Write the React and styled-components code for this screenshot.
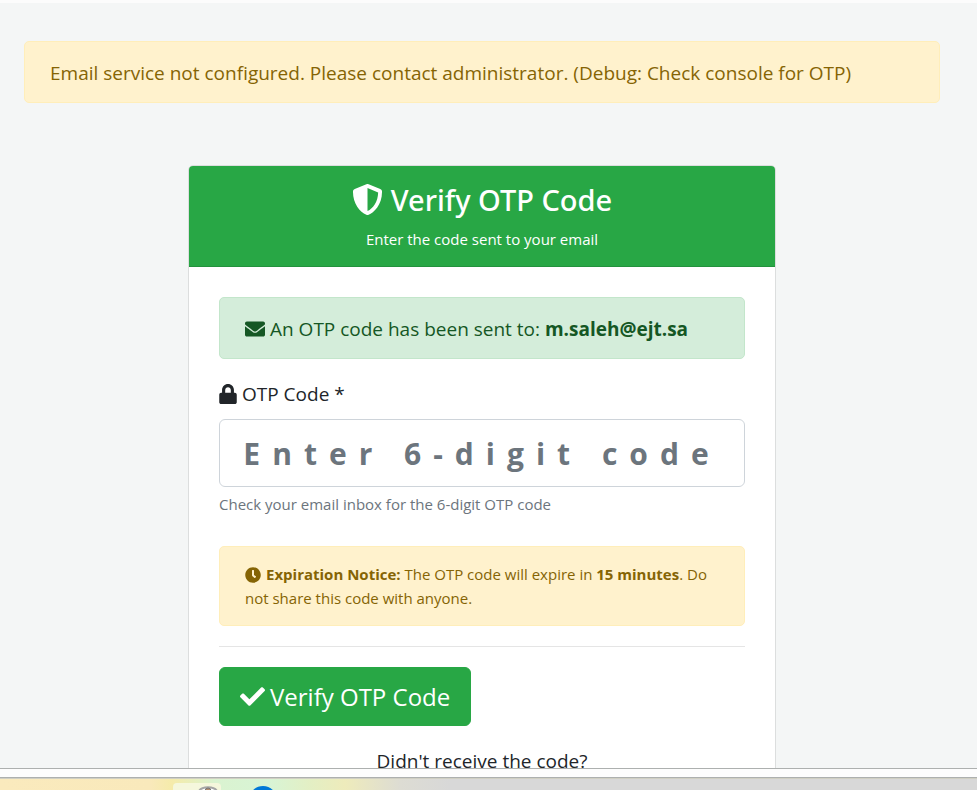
import React from "react";
import styled, { createGlobalStyle, css } from "styled-components";
import { FaShieldAlt, FaEnvelope, FaLock, FaClock, FaCheck } from "react-icons/fa";

const fontStack = `"Segoe UI", "Open Sans", "Noto Sans", sans-serif`;

const GlobalStyle = createGlobalStyle`
  *, *::before, *::after { box-sizing: border-box; }
  body {
    margin: 0;
    font-family: ${fontStack};
    font-size: 19px;
    line-height: 30px;
    color: #212529;
  }
`;

const Screen = styled.div`
  display: flex;
  flex-direction: column;
  height: 100vh;
  overflow: hidden;
`;

const Viewport = styled.main`
  flex: 1;
  min-height: 0;
  overflow: hidden;
  display: flex;
  flex-direction: column;
  align-items: center;
  gap: 62px;
  padding: 38px 37px 0 24px;
  border-top: 3px solid #fcfcfc;
  background: #f4f6f6;
`;

const tones = {
  warning: css`
    color: #856404;
    background: #fff2cd;
    border-color: #ffeeba;
  `,
  success: css`
    color: #155724;
    background: #d4edda;
    border-color: #c3e6cb;
  `,
};

const Alert = styled.div`
  width: 100%;
  padding: ${(p) => (p.$small ? "15px 25px" : "16px 25px 14px")};
  border: 1px solid;
  border-radius: 5px;
  font-size: ${(p) => (p.$small ? "15px" : "19px")};
  line-height: ${(p) => (p.$small ? "24px" : "30px")};
  ${(p) => tones[p.$tone]}
`;

const Icon = styled.span`
  display: inline-flex;
  justify-content: center;
  width: ${(p) => p.$width || "auto"};
  vertical-align: ${(p) => p.$drop || "-3px"};
  margin-right: ${(p) => p.$gap || "5px"};
  font-size: ${(p) => p.$size || "20px"};

  svg {
    flex-shrink: 0;
  }
`;

const Card = styled.section`
  width: 100%;
  max-width: 588px;
  flex-shrink: 0;
  border: 1px solid #dcdede;
  border-radius: 5px;
  background: #fff;
`;

const CardHeader = styled.header`
  padding: 15px 25px;
  text-align: center;
  color: #fff;
  background: #28a745;
  border-bottom: 1px solid #23923d;
  border-radius: 4px 4px 0 0;
`;

const Title = styled.h1`
  margin: 0;
  font-family: "Noto Sans", "Open Sans", sans-serif;
  font-size: 29px;
  font-weight: 500;
  line-height: 38px;
`;

const Subtitle = styled.p`
  margin: 8px 0 0;
  font-size: 15px;
  line-height: 24px;
`;

const CardBody = styled.form`
  padding: 30px;
`;

const Field = styled.div`
  display: flex;
  flex-direction: column;
  margin: 20px 0 30px;
`;

const Label = styled.label`
  margin-bottom: 10px;
`;

const CodeInput = styled.input`
  width: 100%;
  height: 68px;
  padding: 10px 20px;
  border: 1px solid #ced4da;
  border-radius: 6px;
  background: #fff;
  color: #495057;
  font: bold 30px ${fontStack};
  letter-spacing: 12px;
  text-align: center;
  &::placeholder {
    color: #6c757d;
    opacity: 1;
  }
`;

const Hint = styled.small`
  margin-top: 5px;
  font-size: 15px;
  line-height: 24px;
  color: #6c757d;
`;

const Divider = styled.hr`
  margin: 20px 0;
  border: 0;
  border-top: 1px solid #e5e5e5;
`;

const SubmitButton = styled.button`
  display: inline-flex;
  align-items: center;
  height: 59px;
  padding: 0 20px;
  border: 1px solid #28a745;
  border-radius: 6px;
  background: #28a745;
  color: #fff;
  font-family: inherit;
  font-size: 24px;
  line-height: 38px;
  cursor: pointer;
`;

const Resend = styled.p`
  margin: 20px 0 0;
  text-align: center;
`;

const WindowEdge = styled.div`
  height: 10px;
  flex-shrink: 0;
  border: solid #adb0af;
  border-width: 1px 0;
  background: #fdfdfd;
`;

const Taskbar = styled.footer`
  display: flex;
  align-items: flex-start;
  height: 12px;
  flex-shrink: 0;
  overflow: hidden;
  padding-left: 173px;
  border-top: 1px solid #d0cfc3;
  background: linear-gradient(
    90deg,
    #faeabd 0,
    #f9e9bb 150px,
    #f5ebaa 172px,
    #daf3d0 215px,
    #d8f4d5 270px,
    #e3efc4 310px,
    #eeebbb 345px,
    #dddcd3 400px,
    #d8d8d8 450px
  );
`;

const TaskTile = styled.div`
  display: flex;
  justify-content: flex-end;
  width: 48px;
  height: 20px;
  flex-shrink: 0;
  margin-top: 4px;
  padding: 3px 3px 0 0;
  border-radius: 4px 4px 0 0;
  background: #f5f7dc;
`;

const TaskDot = styled.div`
  width: 28px;
  height: 28px;
  flex-shrink: 0;
  margin: 7px 0 0 28px;
  border-radius: 50%;
  background: #0078d7;
`;

export default function App() {
  return (
    <Screen>
      <GlobalStyle />
      <Viewport>
        <Alert $tone="warning" role="alert">
          Email service not configured. Please contact administrator. (Debug: Check console for OTP)
        </Alert>
        <Card>
          <CardHeader>
            <Title>
              <Icon $size="31px" $drop="-4px" $gap="8px"><FaShieldAlt /></Icon>
              Verify OTP Code
            </Title>
            <Subtitle>Enter the code sent to your email</Subtitle>
          </CardHeader>
          <CardBody onSubmit={(e) => e.preventDefault()}>
            <Alert $tone="success">
              <Icon><FaEnvelope /></Icon>
              An OTP code has been sent to: <strong>m.saleh@ejt.sa</strong>
            </Alert>
            <Field>
              <Label htmlFor="otp">
                <Icon $width="18px"><FaLock /></Icon>
                OTP Code *
              </Label>
              <CodeInput id="otp" type="text" inputMode="numeric" maxLength={6} placeholder="Enter 6-digit code" />
              <Hint>Check your email inbox for the 6-digit OTP code</Hint>
            </Field>
            <Alert $tone="warning" $small>
              <Icon $size="16px"><FaClock /></Icon>
              <strong>Expiration Notice:</strong> The OTP code will expire in <strong>15 minutes</strong>. Do not share
              this code with anyone.
            </Alert>
            <Divider />
            <SubmitButton type="submit">
              <Icon $size="25px"><FaCheck /></Icon>
              Verify OTP Code
            </SubmitButton>
            <Resend>Didn't receive the code?</Resend>
          </CardBody>
        </Card>
      </Viewport>
      <WindowEdge />
      <Taskbar>
        <TaskTile>
          <svg width="20" height="12" viewBox="0 0 20 12" aria-hidden="true">
            <path d="M1 5C4 0 16 0 19 5" fill="#fff" stroke="#a5a5a5" strokeWidth="2" />
            <circle cx="10" cy="5" r="3" fill="#b08a6c" stroke="#777" />
          </svg>
        </TaskTile>
        <TaskDot />
      </Taskbar>
    </Screen>
  );
}
